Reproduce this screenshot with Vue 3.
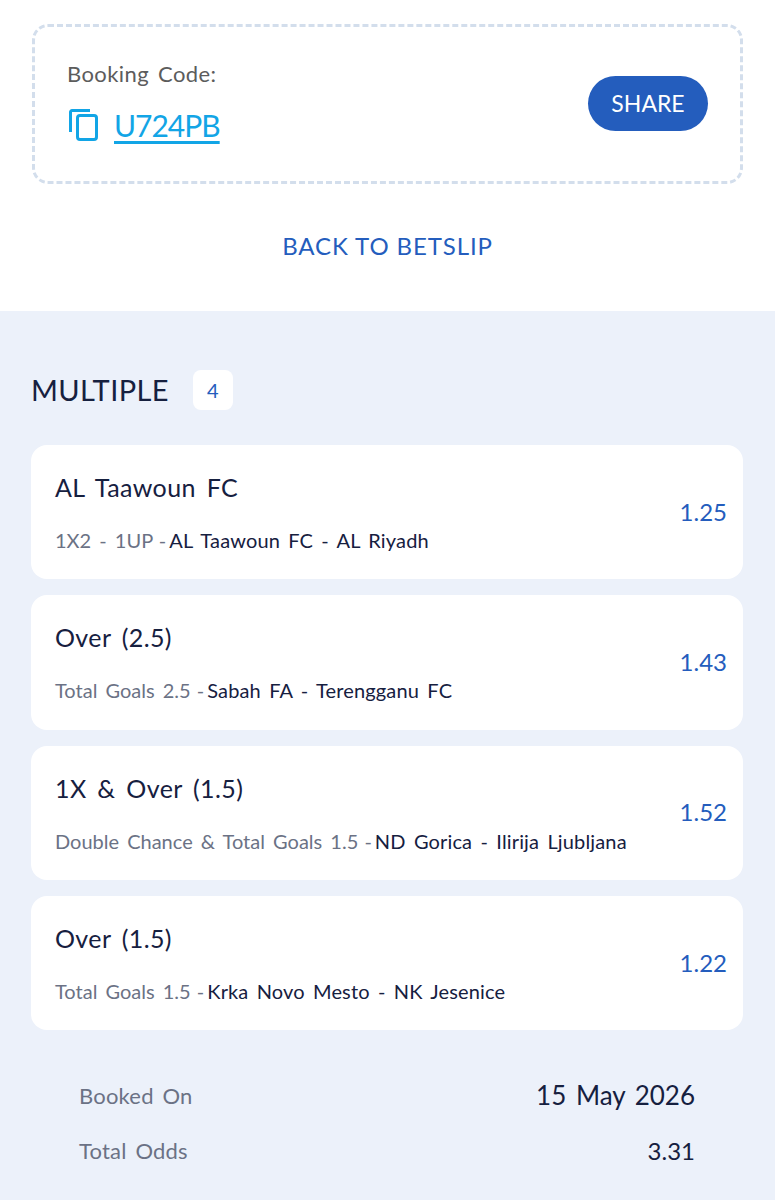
<script setup>
const selections = [
  { pick: "AL Taawoun FC", market: "1X2 - 1UP", match: "AL Taawoun FC - AL Riyadh", odds: "1.25" },
  { pick: "Over (2.5)", market: "Total Goals 2.5", match: "Sabah FA - Terengganu FC", odds: "1.43" },
  { pick: "1X & Over (1.5)", market: "Double Chance & Total Goals 1.5", match: "ND Gorica - Ilirija Ljubljana", odds: "1.52" },
  { pick: "Over (1.5)", market: "Total Goals 1.5", match: "Krka Novo Mesto - NK Jesenice", odds: "1.22" },
];
</script>

<template>
  <div class="page">
    <section class="top">
      <div class="code-box">
        <div class="code-left">
          <p class="code-label">Booking Code:</p>
          <div class="code-row">
            <svg class="copy-icon" viewBox="0 0 29 32" width="29" height="32" fill="none" stroke="#12a5e6" stroke-width="3">
              <path d="M1.5 23V3a1.5 1.5 0 0 1 1.5-1.5H21" />
              <rect x="8.5" y="6.5" width="19" height="24" rx="2.5" />
            </svg>
            <a class="code-value">U724PB</a>
          </div>
        </div>
        <button class="share">SHARE</button>
      </div>
      <div class="back">BACK TO BETSLIP</div>
    </section>

    <section class="slip">
      <div class="heading">
        <h2>MULTIPLE</h2>
        <span class="count">4</span>
      </div>

      <div class="list">
        <div v-for="s in selections" :key="s.match" class="card">
          <div class="card-text">
            <div class="pick">{{ s.pick }}</div>
            <div class="desc">
              <span class="market">{{ s.market }} <span class="dash">-</span></span>
              <span class="match">{{ s.match }}</span>
            </div>
          </div>
          <div class="odds">{{ s.odds }}</div>
        </div>
      </div>

      <div class="summary">
        <div class="summary-row">
          <span class="summary-label">Booked On</span>
          <span class="summary-value">15 May 2026</span>
        </div>
        <div class="summary-row">
          <span class="summary-label">Total Odds</span>
          <span class="summary-value small">3.31</span>
        </div>
      </div>
    </section>
  </div>
</template>

<style>
html,
body {
  margin: 0;
  background: #ecf1fa;
}
</style>

<style scoped>
.page {
  width: 775px;
  height: 1200px;
  overflow: hidden;
  font-family: "Lato", "Noto Sans", sans-serif;
  color: #16203f;
}

.top {
  height: 311px;
  box-sizing: border-box;
  padding: 24px 32px 0;
  background: #fff;
}

.code-box {
  height: 160px;
  width: 711px;
  box-sizing: border-box;
  padding: 0 32px;
  display: flex;
  align-items: center;
  justify-content: space-between;
  border: 3px dashed #d3deec;
  border-radius: 16px;
}

.code-left {
  margin-bottom: 6px;
}

.code-label {
  margin: 0 0 19px;
  font-size: 22px;
  line-height: 28px;
  letter-spacing: 0.4px;
  word-spacing: 3px;
  color: #5c5c5c;
}

.code-row {
  display: flex;
  align-items: flex-start;
  gap: 16px;
  margin-left: 2px;
}

.copy-icon {
  margin-top: 2px;
}

.code-value {
  font-size: 30px;
  line-height: 36px;
  letter-spacing: -1px;
  color: #12a5e6;
  text-decoration: underline;
  text-underline-offset: 4px;
}

.share {
  width: 120px;
  height: 55px;
  margin-top: -2px;
  border: 0;
  border-radius: 28px;
  background: #245dbd;
  color: #fff;
  font-family: inherit;
  font-size: 23px;
}

.back {
  margin-top: 43px;
  text-align: center;
  font-size: 24px;
  line-height: 38px;
  letter-spacing: 0.9px;
  color: #245dbd;
}

.slip {
  height: 889px;
  box-sizing: border-box;
  padding: 59px 32px 0 31px;
  background: #ecf1fa;
}

.heading {
  display: flex;
  align-items: center;
  gap: 24px;
  height: 40px;
}

.heading h2 {
  margin: 0 0 2px;
  font-size: 29px;
  font-weight: 400;
  letter-spacing: 0.4px;
}

.count {
  width: 40px;
  height: 40px;
  display: flex;
  align-items: center;
  justify-content: center;
  border-radius: 8px;
  background: #fff;
  color: #245dbd;
  font-size: 20px;
}

.list {
  margin-top: 35px;
  display: flex;
  flex-direction: column;
  gap: 16px;
}

.card {
  height: 134.33px;
  box-sizing: border-box;
  padding: 0 16px 0 24px;
  display: flex;
  align-items: center;
  justify-content: space-between;
  border-radius: 16px;
  background: #fff;
}

.pick {
  font-size: 25px;
  line-height: 32px;
  letter-spacing: 0.4px;
  word-spacing: 4px;
}

.desc {
  margin-top: 24px;
  font-size: 20px;
  line-height: 26px;
  word-spacing: 3px;
  display: flex;
  gap: 1px;
}

.market {
  color: #6b7285;
}

.dash {
  margin: 0 2px 0 -2px;
}

.match {
  letter-spacing: 0.15px;
}

.odds {
  margin-bottom: 2px;
  font-size: 24px;
  color: #245dbd;
}

.summary {
  margin-top: 47px;
  padding: 0 48px;
  display: flex;
  flex-direction: column;
  gap: 19px;
}

.summary-row {
  height: 36px;
  display: flex;
  align-items: center;
  justify-content: space-between;
}

.summary-label {
  font-size: 22px;
  letter-spacing: 0.2px;
  word-spacing: 3px;
  color: #6b7285;
}

.summary-value {
  font-size: 26px;
  word-spacing: 3px;
}

.summary-value.small {
  font-size: 24px;
}
</style>
